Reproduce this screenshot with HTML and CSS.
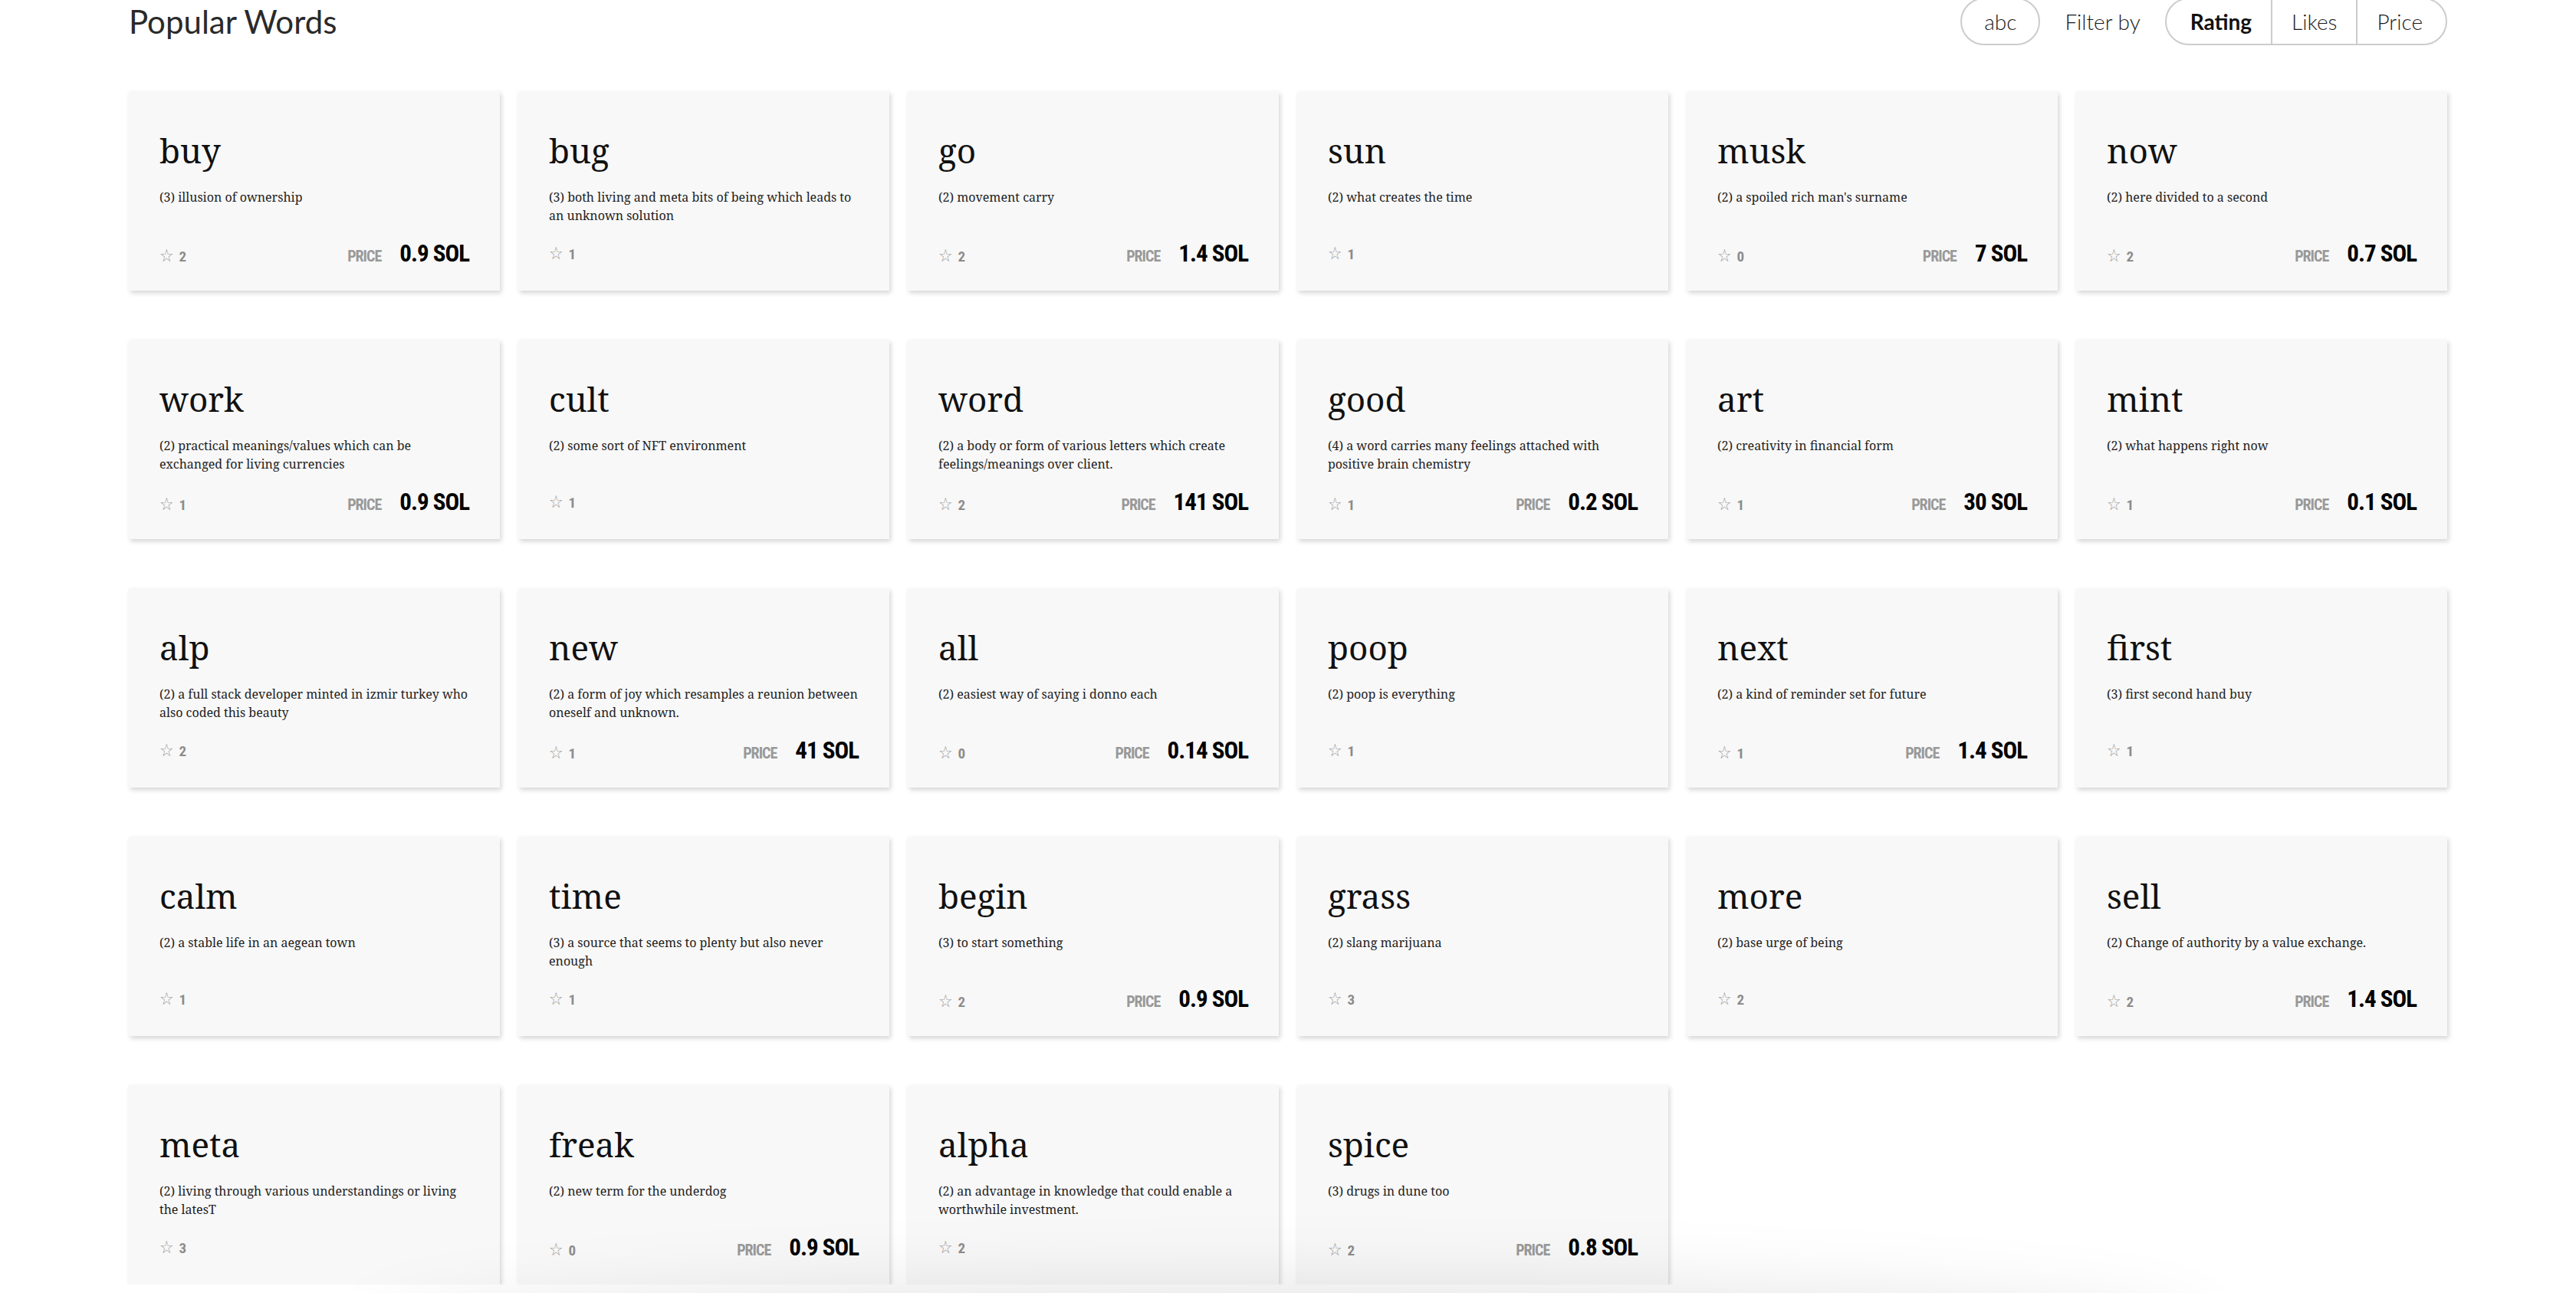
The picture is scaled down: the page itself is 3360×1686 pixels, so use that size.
FILE: index.html
```html
<!DOCTYPE html>
<html lang="en">
<head>
<meta charset="utf-8">
<title>Popular Words</title>
<link rel="stylesheet" href="styles.css">
</head>
<body>
<div class="page">
  <header class="header">
    <h1 class="title">Popular Words</h1>
    <div class="controls">
      <div class="pill">abc</div>
      <div class="filter-label">Filter by</div>
      <div class="segmented">
        <div class="seg active">Rating</div>
        <div class="seg">Likes</div>
        <div class="seg">Price</div>
      </div>
    </div>
  </header>

  <main class="grid">
    <div class="card"><div class="word">buy</div><div class="desc">(3) illusion of ownership</div><div class="foot"><span class="rating"><span class="star">☆</span>2</span><span class="price"><span class="plabel">PRICE</span><span class="pval">0.9 SOL</span></span></div></div>
    <div class="card"><div class="word">bug</div><div class="desc">(3) both living and meta bits of being which leads to an unknown solution</div><div class="foot"><span class="rating"><span class="star">☆</span>1</span></div></div>
    <div class="card"><div class="word">go</div><div class="desc">(2) movement carry</div><div class="foot"><span class="rating"><span class="star">☆</span>2</span><span class="price"><span class="plabel">PRICE</span><span class="pval">1.4 SOL</span></span></div></div>
    <div class="card"><div class="word">sun</div><div class="desc">(2) what creates the time</div><div class="foot"><span class="rating"><span class="star">☆</span>1</span></div></div>
    <div class="card"><div class="word">musk</div><div class="desc">(2) a spoiled rich man's surname</div><div class="foot"><span class="rating"><span class="star">☆</span>0</span><span class="price"><span class="plabel">PRICE</span><span class="pval">7 SOL</span></span></div></div>
    <div class="card"><div class="word">now</div><div class="desc">(2) here divided to a second</div><div class="foot"><span class="rating"><span class="star">☆</span>2</span><span class="price"><span class="plabel">PRICE</span><span class="pval">0.7 SOL</span></span></div></div>

    <div class="card"><div class="word">work</div><div class="desc">(2) practical meanings/values which can be exchanged for living currencies</div><div class="foot"><span class="rating"><span class="star">☆</span>1</span><span class="price"><span class="plabel">PRICE</span><span class="pval">0.9 SOL</span></span></div></div>
    <div class="card"><div class="word">cult</div><div class="desc">(2) some sort of NFT environment</div><div class="foot"><span class="rating"><span class="star">☆</span>1</span></div></div>
    <div class="card"><div class="word">word</div><div class="desc">(2) a body or form of various letters which create feelings/meanings over client.</div><div class="foot"><span class="rating"><span class="star">☆</span>2</span><span class="price"><span class="plabel">PRICE</span><span class="pval">141 SOL</span></span></div></div>
    <div class="card"><div class="word">good</div><div class="desc">(4) a word carries many feelings attached with positive brain chemistry</div><div class="foot"><span class="rating"><span class="star">☆</span>1</span><span class="price"><span class="plabel">PRICE</span><span class="pval">0.2 SOL</span></span></div></div>
    <div class="card"><div class="word">art</div><div class="desc">(2) creativity in financial form</div><div class="foot"><span class="rating"><span class="star">☆</span>1</span><span class="price"><span class="plabel">PRICE</span><span class="pval">30 SOL</span></span></div></div>
    <div class="card"><div class="word">mint</div><div class="desc">(2) what happens right now</div><div class="foot"><span class="rating"><span class="star">☆</span>1</span><span class="price"><span class="plabel">PRICE</span><span class="pval">0.1 SOL</span></span></div></div>

    <div class="card"><div class="word">alp</div><div class="desc">(2) a full stack developer minted in izmir turkey who also coded this beauty</div><div class="foot"><span class="rating"><span class="star">☆</span>2</span></div></div>
    <div class="card"><div class="word">new</div><div class="desc">(2) a form of joy which resamples a reunion between oneself and unknown.</div><div class="foot"><span class="rating"><span class="star">☆</span>1</span><span class="price"><span class="plabel">PRICE</span><span class="pval">41 SOL</span></span></div></div>
    <div class="card"><div class="word">all</div><div class="desc">(2) easiest way of saying i donno each</div><div class="foot"><span class="rating"><span class="star">☆</span>0</span><span class="price"><span class="plabel">PRICE</span><span class="pval">0.14 SOL</span></span></div></div>
    <div class="card"><div class="word">poop</div><div class="desc">(2) poop is everything</div><div class="foot"><span class="rating"><span class="star">☆</span>1</span></div></div>
    <div class="card"><div class="word">next</div><div class="desc">(2) a kind of reminder set for future</div><div class="foot"><span class="rating"><span class="star">☆</span>1</span><span class="price"><span class="plabel">PRICE</span><span class="pval">1.4 SOL</span></span></div></div>
    <div class="card"><div class="word">first</div><div class="desc">(3) first second hand buy</div><div class="foot"><span class="rating"><span class="star">☆</span>1</span></div></div>

    <div class="card"><div class="word">calm</div><div class="desc">(2) a stable life in an aegean town</div><div class="foot"><span class="rating"><span class="star">☆</span>1</span></div></div>
    <div class="card"><div class="word">time</div><div class="desc">(3) a source that seems to plenty but also never enough</div><div class="foot"><span class="rating"><span class="star">☆</span>1</span></div></div>
    <div class="card"><div class="word">begin</div><div class="desc">(3) to start something</div><div class="foot"><span class="rating"><span class="star">☆</span>2</span><span class="price"><span class="plabel">PRICE</span><span class="pval">0.9 SOL</span></span></div></div>
    <div class="card"><div class="word">grass</div><div class="desc">(2) slang marijuana</div><div class="foot"><span class="rating"><span class="star">☆</span>3</span></div></div>
    <div class="card"><div class="word">more</div><div class="desc">(2) base urge of being</div><div class="foot"><span class="rating"><span class="star">☆</span>2</span></div></div>
    <div class="card"><div class="word">sell</div><div class="desc">(2) Change of authority by a value exchange.</div><div class="foot"><span class="rating"><span class="star">☆</span>2</span><span class="price"><span class="plabel">PRICE</span><span class="pval">1.4 SOL</span></span></div></div>

    <div class="card"><div class="word">meta</div><div class="desc">(2) living through various understandings or living the latesT</div><div class="foot"><span class="rating"><span class="star">☆</span>3</span></div></div>
    <div class="card"><div class="word">freak</div><div class="desc">(2) new term for the underdog</div><div class="foot"><span class="rating"><span class="star">☆</span>0</span><span class="price"><span class="plabel">PRICE</span><span class="pval">0.9 SOL</span></span></div></div>
    <div class="card"><div class="word">alpha</div><div class="desc">(2) an advantage in knowledge that could enable a worthwhile investment.</div><div class="foot"><span class="rating"><span class="star">☆</span>2</span></div></div>
    <div class="card"><div class="word">spice</div><div class="desc">(3) drugs in dune too</div><div class="foot"><span class="rating"><span class="star">☆</span>2</span><span class="price"><span class="plabel">PRICE</span><span class="pval">0.8 SOL</span></span></div></div>
  </main>
</div>
<div class="dock-shadow"></div>
</body>
</html>
```

FILE: styles.css
```css
* {
  box-sizing: border-box;
}

html, body {
  margin: 0;
  padding: 0;
  background: #ffffff;
  overflow: hidden;
}

body {
  font-family: Lato, "Noto Sans", sans-serif;
  color: #222;
}

.page {
  width: 3024px;
  margin: 0 auto;
}

.header {
  display: flex;
  align-items: center;
  justify-content: space-between;
  height: 62px;
  margin-top: -3px;
}

.title {
  margin: 0;
  font-size: 42px;
  font-weight: 400;
  line-height: 50px;
  color: #2a2a2a;
}

.controls {
  display: flex;
  align-items: center;
  gap: 32px;
}

.pill {
  display: flex;
  align-items: center;
  height: 62px;
  padding: 0 29px;
  border: 2px solid #cccccc;
  border-radius: 31px;
  font-size: 28px;
  font-weight: 300;
  color: #1a1a1a;
}

.filter-label {
  font-size: 28px;
  font-weight: 300;
  color: #1a1a1a;
}

.segmented {
  display: flex;
  height: 62px;
  border: 2px solid #cccccc;
  border-radius: 31px;
}

.seg {
  display: flex;
  align-items: center;
  padding: 0 25px;
  font-size: 28px;
  font-weight: 300;
  color: #1a1a1a;
  border-left: 2px solid #cccccc;
}

.seg:first-child {
  border-left: 0;
  padding-left: 31px;
}

.seg:last-child {
  padding-right: 30px;
}

.seg.active {
  font-weight: 700;
  color: #111;
}

.grid {
  display: grid;
  grid-template-columns: repeat(6, 1fr);
  column-gap: 24px;
  row-gap: 64px;
  margin-top: 60px;
}

.card {
  height: 260px;
  padding: 51px 40px 0 40px;
  background: #f8f8f8;
  box-shadow: 2px 3px 6px rgba(0, 0, 0, 0.17);
  display: flex;
  flex-direction: column;
}

.word {
  font-family: "Noto Serif", "DejaVu Serif", serif;
  font-size: 44px;
  line-height: 52px;
  color: #111;
}

.desc {
  margin-top: 23px;
  height: 48px;
  font-family: "Noto Serif", "DejaVu Serif", serif;
  font-size: 16px;
  line-height: 24px;
  color: #222;
}

.foot {
  margin-top: 27px;
  display: flex;
  align-items: baseline;
  justify-content: space-between;
}

.rating {
  font-family: "Roboto Condensed", "Liberation Sans Narrow", "DejaVu Sans Condensed", sans-serif;
  font-stretch: condensed;
  font-weight: 700;
  font-size: 19px;
  line-height: 20px;
  color: #8c8c8c;
}

.star {
  font-family: "DejaVu Sans", sans-serif;
  font-weight: 400;
  font-size: 23px;
  color: #9a9a9a;
  margin-right: 7px;
}

.price {
  display: flex;
  align-items: baseline;
  gap: 24px;
  font-family: "Roboto Condensed", "Liberation Sans Narrow", "DejaVu Sans Condensed", sans-serif;
  font-stretch: condensed;
  font-weight: 700;
}

.plabel {
  font-size: 20px;
  letter-spacing: -1px;
  color: #999;
  line-height: 22px;
}

.pval {
  font-size: 31px;
  letter-spacing: -1px;
  line-height: 22px;
  color: #000;
}

.dock-shadow {
  position: fixed;
  left: 480px;
  width: 2400px;
  bottom: -160px;
  height: 160px;
  border-radius: 50%;
  box-shadow: 0 0 110px rgba(0, 0, 0, 0.13);
  pointer-events: none;
}
```
